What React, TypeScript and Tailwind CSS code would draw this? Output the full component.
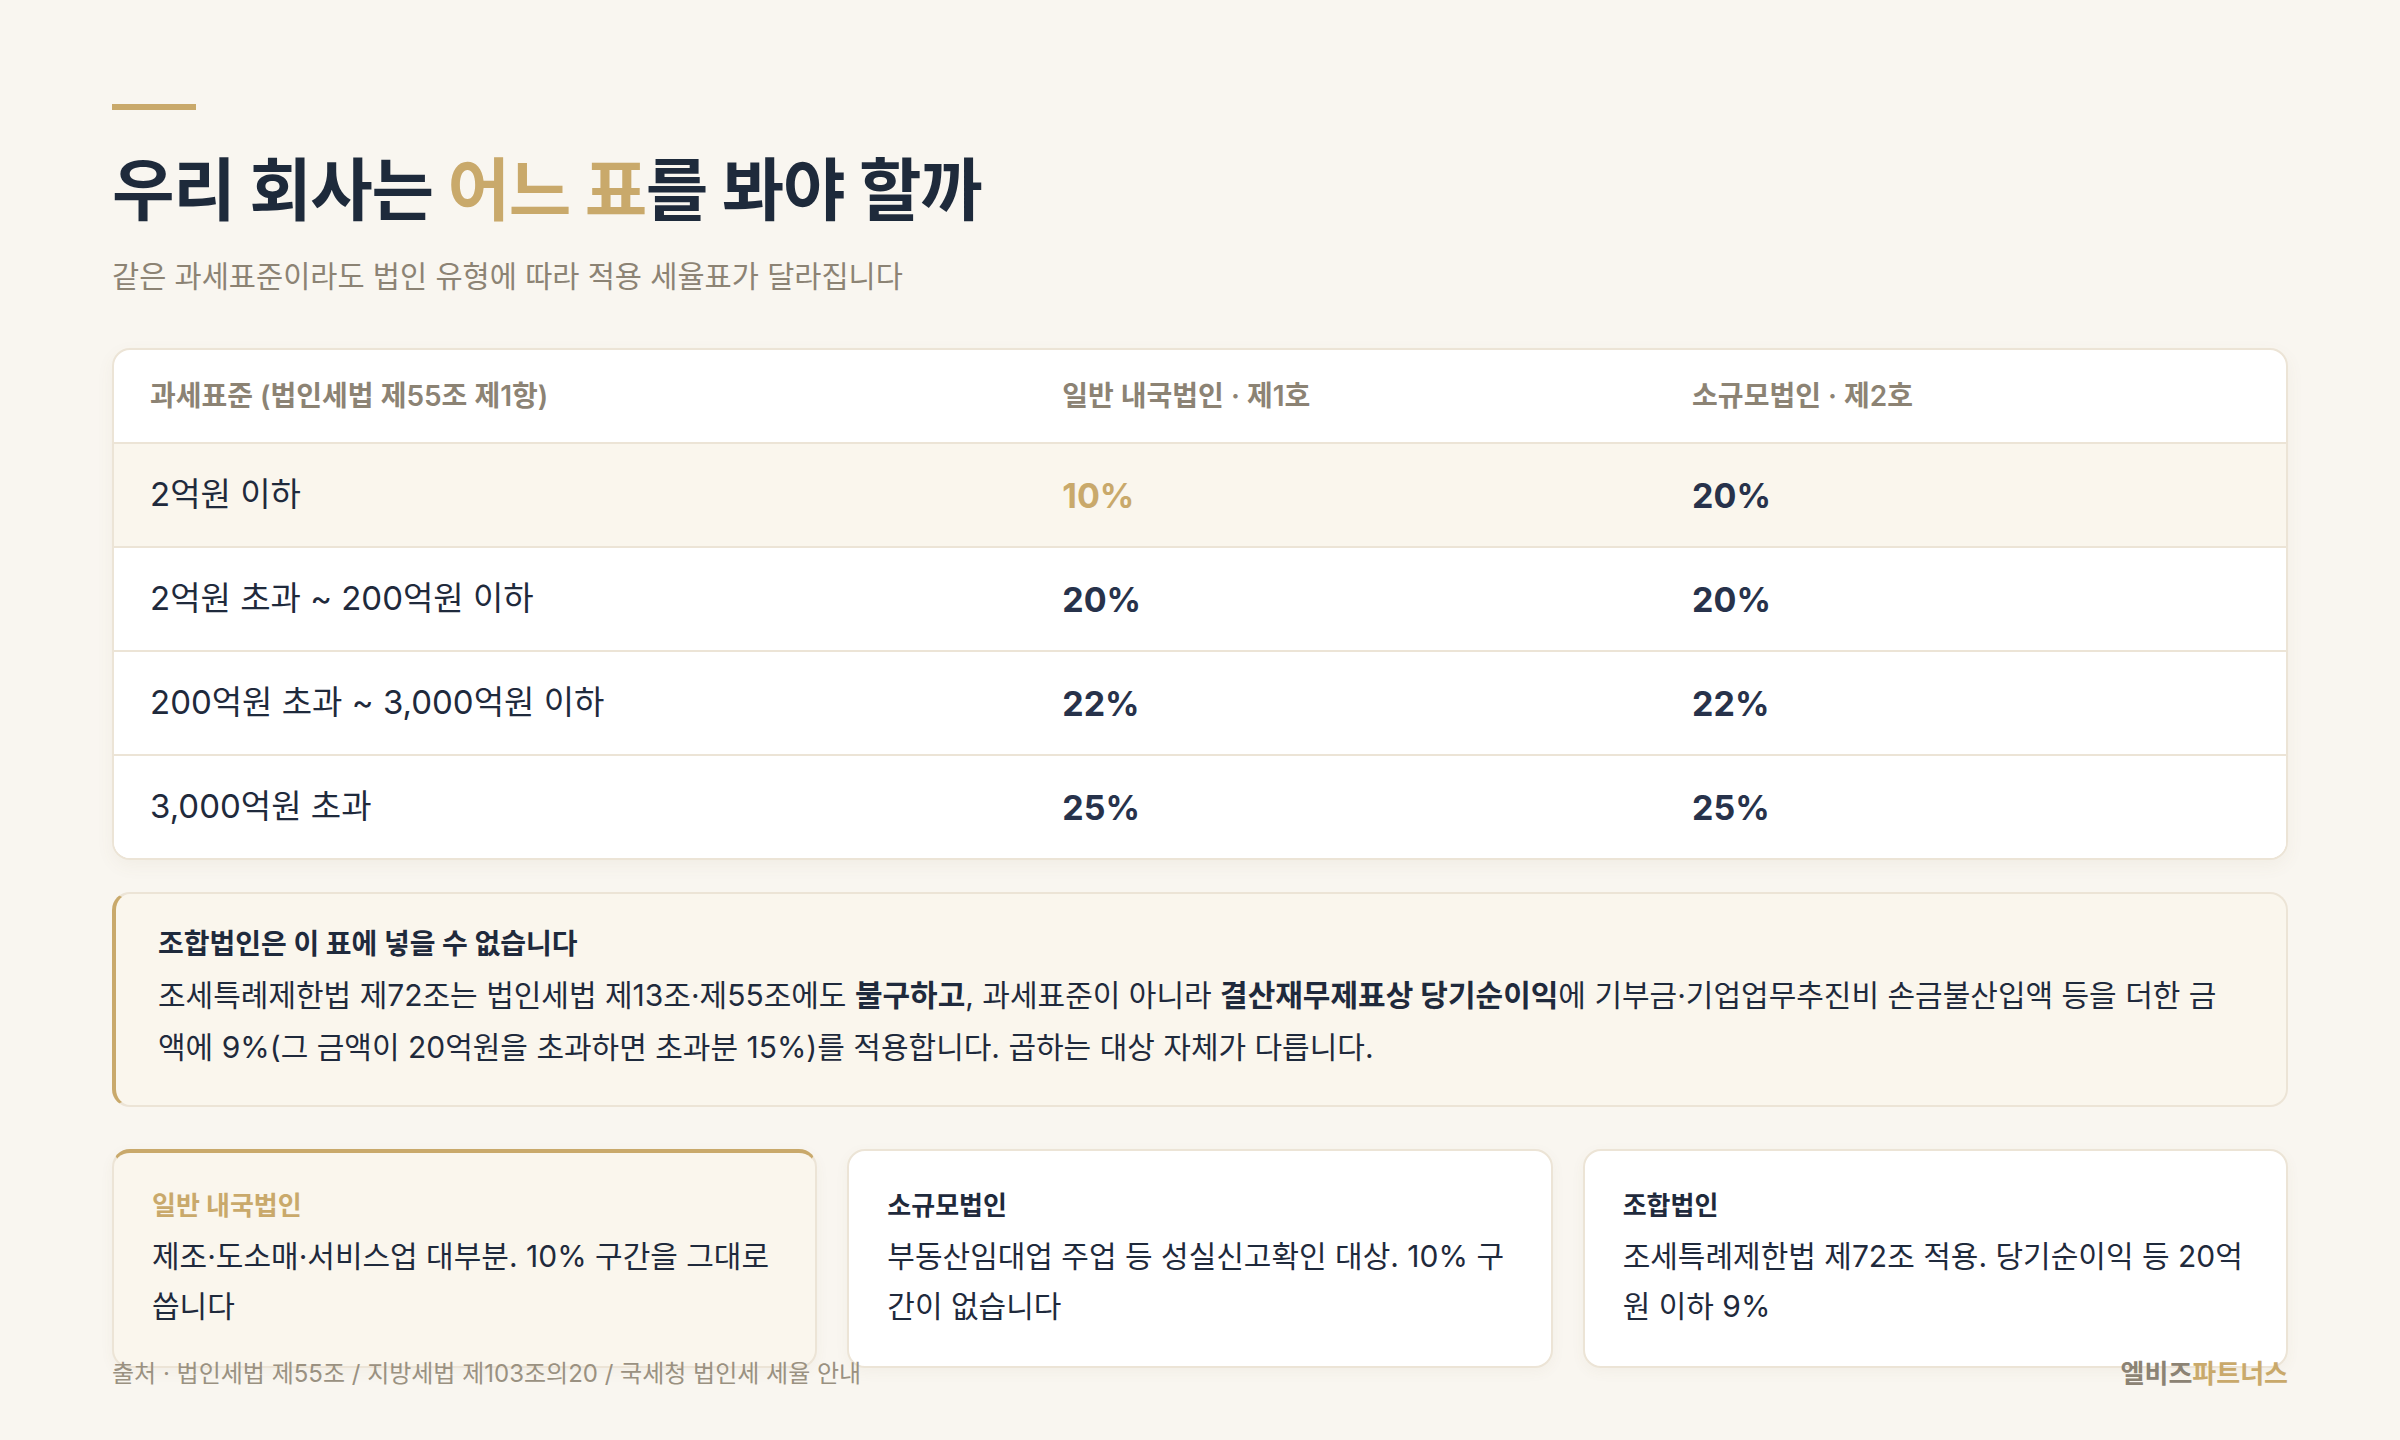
import React from "react";

const rows = [
  { label: "2억원 이하", a: "10%", b: "20%", hi: true },
  { label: "2억원 초과 ~ 200억원 이하", a: "20%", b: "20%", hi: false },
  { label: "200억원 초과 ~ 3,000억원 이하", a: "22%", b: "22%", hi: false },
  { label: "3,000억원 초과", a: "25%", b: "25%", hi: false },
];

export default function App() {
  return (
    <div className="w-[2400px] h-[1440px] overflow-hidden bg-[#f9f6f0] px-[112px] pt-[104px] flex flex-col font-['Inter','Noto_Sans_CJK_KR',sans-serif] text-[#1f2a3c]">
      <div className="w-[84px] h-[6px] bg-[#c9a96b]" />
      <h1 className="mt-[40px] text-[68px] leading-[80px] font-bold tracking-[-0.02em] text-[#1e2a3b]">
        우리 회사는 <span className="text-[#c9a96b]">어느 표</span>를 봐야 할까
      </h1>
      <p className="mt-[26px] text-[29.5px] leading-[40px] text-[#8c8374]">
        같은 과세표준이라도 법인 유형에 따라 적용 세율표가 달라집니다
      </p>

      <div className="mt-[52px] bg-white border-2 border-[#ece4d6] rounded-[18px] overflow-hidden shadow-[0_6px_18px_rgba(120,100,60,0.06)]">
        <div className="grid grid-cols-[42fr_29fr_29fr] h-[92px] items-center text-[28px] font-semibold text-[#8c8374]">
          <div className="px-[36px]">과세표준 (법인세법 제55조 제1항)</div>
          <div className="px-[36px]">일반 내국법인 · 제1호</div>
          <div className="px-[36px]">소규모법인 · 제2호</div>
        </div>
        {rows.map((r) => (
          <div
            key={r.label}
            className={`grid grid-cols-[42fr_29fr_29fr] h-[104px] items-center border-t-2 border-[#ece4d6] ${r.hi ? "bg-[#faf6ed]" : "bg-white"}`}
          >
            <div className="px-[36px] text-[33px] text-[#1f2a3c]">{r.label}</div>
            <div className={`px-[36px] text-[34px] font-bold ${r.hi ? "text-[#c9a96b]" : "text-[#27324b]"}`}>{r.a}</div>
            <div className="px-[36px] text-[34px] font-bold text-[#27324b]">{r.b}</div>
          </div>
        ))}
      </div>

      <div className="mt-[32px] bg-[#faf6ed] border-2 border-l-4 border-[#ece4d6] border-l-[#c9a96b] rounded-[18px] pl-[42px] pr-[40px] pt-[31px] pb-[32px]">
        <div className="text-[28px] leading-[38px] font-bold text-[#1f2a3c]">조합법인은 이 표에 넣을 수 없습니다</div>
        <p className="mt-[6px] text-[30px] leading-[52px] text-[#1f2a3c]">
          조세특례제한법 제72조는 법인세법 제13조·제55조에도 <b className="font-bold">불구하고</b>, 과세표준이 아니라{" "}
          <b className="font-bold">결산재무제표상 당기순이익</b>에 기부금·기업업무추진비 손금불산입액 등을 더한 금
          <br />
          액에 9%(그 금액이 20억원을 초과하면 초과분 15%)를 적용합니다. 곱하는 대상 자체가 다릅니다.
        </p>
      </div>

      <div className="mt-[42px] grid grid-cols-3 gap-[30px]">
        <div className="bg-[#faf6ed] border-2 border-t-4 border-[#ece4d6] border-t-[#c9a96b] rounded-[18px] px-[38px] pt-[35px] pb-[35px] shadow-[0_4px_14px_rgba(120,100,60,0.05)]">
          <div className="text-[26px] leading-[36px] font-bold text-[#c9a96b]">일반 내국법인</div>
          <p className="mt-[7px] text-[30px] leading-[50px] text-[#1f2a3c]">
            제조·도소매·서비스업 대부분. 10% 구간을 그대로
            <br />
            씁니다
          </p>
        </div>
        <div className="bg-white border-2 border-[#ece4d6] rounded-[18px] px-[38px] pt-[37px] pb-[35px] shadow-[0_4px_14px_rgba(120,100,60,0.05)]">
          <div className="text-[26px] leading-[36px] font-bold text-[#1f2a3c]">소규모법인</div>
          <p className="mt-[7px] text-[30px] leading-[50px] text-[#1f2a3c]">
            부동산임대업 주업 등 성실신고확인 대상. 10% 구
            <br />
            간이 없습니다
          </p>
        </div>
        <div className="bg-white border-2 border-[#ece4d6] rounded-[18px] px-[38px] pt-[37px] pb-[35px] shadow-[0_4px_14px_rgba(120,100,60,0.05)]">
          <div className="text-[26px] leading-[36px] font-bold text-[#1f2a3c]">조합법인</div>
          <p className="mt-[7px] text-[30px] leading-[50px] text-[#1f2a3c]">
            조세특례제한법 제72조 적용. 당기순이익 등 20억
            <br />
            원 이하 9%
          </p>
        </div>
      </div>

      <div className="-mt-[9px] flex justify-between items-center h-[30px]">
        <div className="text-[24px] leading-[30px] text-[#9a9181]">
          출처 · 법인세법 제55조 / 지방세법 제103조의20 / 국세청 법인세 세율 안내
        </div>
        <div className="text-[26px] leading-[30px] font-bold">
          <span className="text-[#8c8374]">엘비즈</span>
          <span className="text-[#c9a96b]">파트너스</span>
        </div>
      </div>
    </div>
  );
}
